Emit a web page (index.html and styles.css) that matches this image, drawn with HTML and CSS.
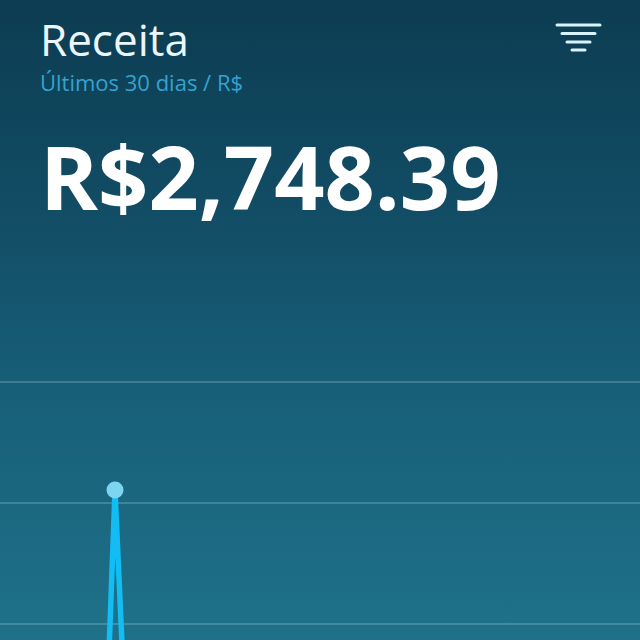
FILE: index.html
```html
<!DOCTYPE html>
<html lang="pt">
<head>
    <meta charset="UTF-8">
    <meta name="viewport" content="width=device-width, initial-scale=1.0">
    <title>Receita</title>
    <link rel="stylesheet" href="styles.css">
</head>
<body>
    <div class="screen">
        <div class="header">
            <div class="heading">
                <div class="title">Receita</div>
                <div class="subtitle">Últimos 30 dias / R$</div>
                <div class="total">R$2,748.39</div>
            </div>
            <svg class="filter" width="48" height="40" viewBox="0 0 48 40">
                <g stroke="#d9f3fa" stroke-width="3" stroke-linecap="round">
                    <line x1="3" y1="10" x2="46" y2="10" />
                    <line x1="8" y1="18.5" x2="41" y2="18.5" />
                    <line x1="13" y1="27" x2="36" y2="27" />
                    <line x1="18" y1="35" x2="31" y2="35" />
                </g>
            </svg>
        </div>

        <svg class="chart" width="640" height="420" viewBox="0 0 640 420">
            <g stroke="rgba(190,225,240,0.32)" stroke-width="1.5">
                <line x1="0" y1="162" x2="640" y2="162" />
                <line x1="0" y1="283" x2="640" y2="283" />
                <line x1="0" y1="404" x2="640" y2="404" />
            </g>
            <polyline points="108.5,445 115,271 123,445" fill="none" stroke="#12bdf3" stroke-width="5.5" stroke-linejoin="round" />
            <circle cx="115" cy="270" r="8.5" fill="#7dd5f2" />
        </svg>
    </div>
</body>
</html>
```

FILE: styles.css
```css
body {
    margin: 0;
    font-family: 'Open Sans', 'Noto Sans', sans-serif;
    background: #0c3b51;
}

.screen {
    width: 640px;
    height: 640px;
    overflow: hidden;
    display: flex;
    flex-direction: column;
    background: linear-gradient(to bottom, #0c3c52 0%, #124e66 35%, #18617a 65%, #1f718a 100%);
}

.header {
    display: flex;
    justify-content: space-between;
    align-items: flex-start;
    padding: 17px 38px 0 40px;
}

.title {
    font-size: 44px;
    line-height: 1;
    color: #eaf6fa;
}

.subtitle {
    margin-top: 10px;
    font-size: 22px;
    line-height: 1;
    color: #35a2cf;
}

.total {
    margin-top: 39px;
    font-size: 88px;
    font-weight: 700;
    line-height: 1;
    color: #ffffff;
}

.filter {
    margin-top: -2px;
}

.chart {
    display: block;
    flex: none;
}
```
